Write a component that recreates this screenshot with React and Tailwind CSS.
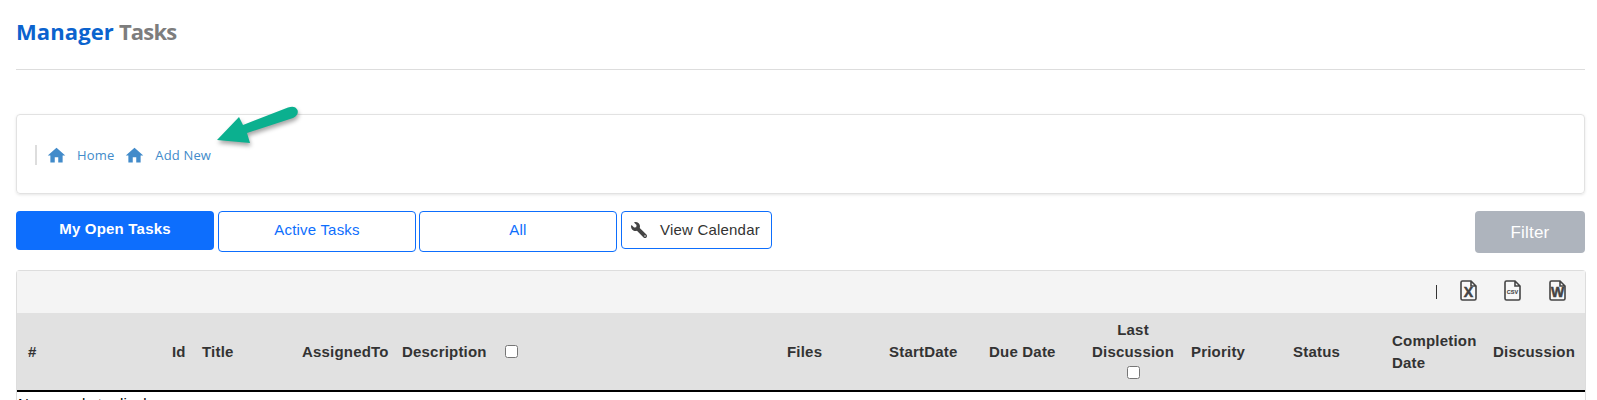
import { MdHome } from 'react-icons/md';
import { FaWrench } from 'react-icons/fa';

const columns = [
  { label: '#', width: 'w-[155px] pl-[11px]' },
  { label: 'Id', width: 'w-[30px]' },
  { label: 'Title', width: 'w-[100px]' },
  { label: 'AssignedTo', width: 'w-[100px]' },
];

const FileIcon = ({ label, small }) => (
  <svg width="17" height="21" viewBox="0 0 17 21" className="shrink-0">
    <path
      d="M2.5 1 H11 L16 6 V18.5 Q16 20 14.5 20 H2.5 Q1 20 1 18.5 V2.5 Q1 1 2.5 1 Z M11 1 V6 H16"
      fill="#f8f8f8"
      stroke="#444"
      strokeWidth="1.6"
    />
    <text
      x="8.5"
      y={small ? 14 : 17}
      textAnchor="middle"
      fill="#444"
      stroke="#444"
      strokeWidth={small ? 0.1 : 0.5}
      fontWeight="bold"
      fontSize={small ? 5.5 : 14}
      letterSpacing="0"
    >
      {label}
    </text>
  </svg>
);

const App = () => {
  return (
    <main className="h-[400px] overflow-hidden bg-white pl-4 pr-3 font-['Liberation_Sans',sans-serif] text-[15px] tracking-[0.2px] text-[#333]">
      <header className="h-[70px] border-b border-[#ddd] pt-[15px]">
        <h1 className="font-['Open_Sans',sans-serif] text-[22px] font-bold leading-8">
          <span className="tracking-[0.1px] text-[#0b63ce]">Manager</span>
          <span className="ml-[5px] tracking-[-0.8px] text-[#7d7d7d]">Tasks</span>
        </h1>
      </header>

      <section className="relative mt-[44px] flex h-[80px] items-center rounded border border-[#e2e2e2] pl-[18px] pt-[2px] shadow-[0_1px_3px_rgba(0,0,0,0.1)]">
        <div className="flex h-5 items-center gap-[10px] border-l-2 border-[#ddd] pl-[11px] font-['Open_Sans',sans-serif] text-[13px] tracking-[0.15px] text-[#428bca]">
          <MdHome size={21} className="-ml-[2px]" />
          <span className="pt-[2px]">Home</span>
          <MdHome size={21} />
          <span className="pt-[2px]">Add New</span>
        </div>
        <svg className="absolute left-[183px] top-[-25px] drop-shadow-[1px_3px_2px_rgba(0,0,0,0.35)]" width="110" height="60" viewBox="0 0 110 60">
          <path d="M17 50 L39 27 L43 35 L88 17.5 Q95 15 97.5 20 Q99 25 93 28 L47 43 L50 53 Z" fill="#0bb08f" />
        </svg>
      </section>

      <div className="mt-[17px] flex items-start">
        <button className="h-[39px] w-[198px] rounded bg-[#0d6efd] pb-[3px] font-bold text-white">My Open Tasks</button>
        <button className="ml-[4px] h-[41px] w-[198px] rounded border border-[#0d6efd] pb-[3px] text-[#0d6efd]">Active Tasks</button>
        <button className="ml-[3px] h-[41px] w-[198px] rounded border border-[#0d6efd] pb-[3px] text-[#0d6efd]">All</button>
        <button className="ml-[4px] flex h-[38px] w-[151px] items-center rounded border border-[#0d6efd] pl-[9px] text-[#333]">
          <FaWrench size={16} className="-scale-x-100 text-[#444]" />
          <span className="ml-[13px]">View Calendar</span>
        </button>
        <button className="ml-auto h-[42px] w-[110px] rounded bg-[#aeb4bd] pt-[1px] text-[17px] text-white">Filter</button>
      </div>

      <section className="-mr-px mt-[17px] rounded-t border-x border-t border-[#ddd]">
        <div className="flex h-[42px] items-center justify-end bg-[#f4f4f4] pb-[3px] pr-[19px]">
          <span className="mr-[23px] mt-[3px] h-[14px] border-l border-[#333]" />
          <FileIcon label="X" />
          <div className="ml-[27px]">
            <FileIcon label="CSV" small />
          </div>
          <div className="ml-[28px]">
            <FileIcon label="W" />
          </div>
        </div>
        <div className="flex h-[79px] items-center border-b-2 border-black bg-[#e1e1e1] pt-[1px] font-bold leading-[22px]">
          {columns.map(col => (
            <div key={col.label} className={col.width}>{col.label}</div>
          ))}
          <div className="w-[385px]">
            Description
            <input type="checkbox" className="ml-[18px] align-[-1px]" />
          </div>
          <div className="w-[102px]">Files</div>
          <div className="w-[100px]">StartDate</div>
          <div className="w-[103px]">Due Date</div>
          <div className="w-[99px]">
            <div className="w-fit text-center">
              Last
              <br />
              Discussion
              <br />
              <input type="checkbox" />
            </div>
          </div>
          <div className="w-[102px]">Priority</div>
          <div className="w-[99px]">Status</div>
          <div className="w-[101px]">
            Completion
            <br />
            Date
          </div>
          <div>Discussion</div>
        </div>
        <div className="pl-[1px] pt-[2px] leading-5 text-black">No records to display</div>
      </section>
    </main>
  );
};

export default App;
